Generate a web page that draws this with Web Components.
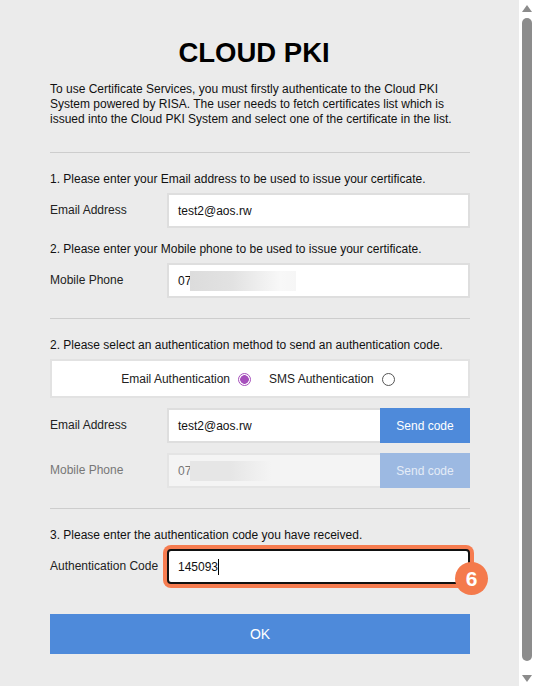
<!DOCTYPE html>
<html>
<head>
<meta charset="utf-8">
<title>Cloud PKI</title>
<style>
    html, body { margin: 0; height: 100%; overflow: hidden; background: #fff; }
    body { display: flex; font: 12px "Liberation Sans", Arial, sans-serif; color: #111; }
</style>
</head>
<body>
<pki-page>
    <h1 slot="title">CLOUD PKI</h1>
    <p slot="intro">To use Certificate Services, you must firstly authenticate to the Cloud PKI<br>System powered by RISA. The user needs to fetch certificates list which is<br>issued into the Cloud PKI System and select one of the certificate in the list.</p>

    <pki-section>
        <pki-note>1. Please enter your Email address to be used to issue your certificate.</pki-note>
        <pki-field label="Email Address" value="test2@aos.rw"></pki-field>
        <pki-note>2. Please enter your Mobile phone to be used to issue your certificate.</pki-note>
        <pki-field label="Mobile Phone" value="07" masked></pki-field>
    </pki-section>

    <pki-section>
        <pki-note>2. Please select an authentication method to send an authentication code.</pki-note>
        <pki-methods></pki-methods>
        <pki-field class="gap" label="Email Address" value="test2@aos.rw" action="Send code"></pki-field>
        <pki-field class="gap" label="Mobile Phone" value="07" masked action="Send code" disabled></pki-field>
    </pki-section>

    <pki-section>
        <pki-note>3. Please enter the authentication code you have received.</pki-note>
        <pki-field label="Authentication Code" value="145093" focused badge="6"></pki-field>
    </pki-section>

    <pki-ok>OK</pki-ok>
</pki-page>
<pki-scrollbar></pki-scrollbar>

<script>
"use strict";

const pageTemplate = document.createElement("template");
pageTemplate.innerHTML = `
    <style>
        :host {
            display: block;
            box-sizing: border-box;
            width: 519px;
            height: 686px;
            padding: 0 49px 0 50px;
            background: #ebebeb;
        }
        ::slotted(h1) {
            margin: 0;
            padding-top: 38px;
            padding-right: 12px;
            text-align: center;
            font-size: 27.5px;
            line-height: 30px;
            font-weight: bold;
            color: #000;
        }
        ::slotted(p) {
            margin: 14px 0 25px;
            line-height: 15px;
        }
    </style>
    <slot name="title"></slot>
    <slot name="intro"></slot>
    <slot></slot>
`;

class PkiPage extends HTMLElement {
    constructor() {
        super();
        this.attachShadow({mode: "open"}).append(pageTemplate.content.cloneNode(true));
    }
}

const sectionTemplate = document.createElement("template");
sectionTemplate.innerHTML = `
    <style>
        :host {
            display: block;
            border-top: 1px solid #cdcdcd;
            padding: 19px 0 20px;
        }
        ::slotted(.gap) {
            margin-top: 10px;
        }
    </style>
    <slot></slot>
`;

class PkiSection extends HTMLElement {
    constructor() {
        super();
        this.attachShadow({mode: "open"}).append(sectionTemplate.content.cloneNode(true));
    }
}

const noteTemplate = document.createElement("template");
noteTemplate.innerHTML = `
    <style>
        :host {
            display: block;
            line-height: 15px;
            margin-bottom: 6px;
        }
        :host(:not(:first-child)) {
            margin-top: 14px;
        }
    </style>
    <slot></slot>
`;

class PkiNote extends HTMLElement {
    constructor() {
        super();
        this.attachShadow({mode: "open"}).append(noteTemplate.content.cloneNode(true));
    }
}

const fieldTemplate = document.createElement("template");
fieldTemplate.innerHTML = `
    <style>
        :host {
            display: flex;
            height: 35px;
            color: #222;
        }
        .label {
            flex: 0 0 117px;
            line-height: 35px;
        }
        .box {
            position: relative;
            flex: 1;
            display: flex;
            align-items: center;
            box-sizing: border-box;
            padding-left: 9px;
            background: #fff;
            border: 2px solid #dedede;
            color: #111;
        }
        .mask {
            width: 106px;
            height: 20px;
            margin-left: -1px;
            background: linear-gradient(90deg, #dcdcdc, #e2e2e2 40%, #f8f8f8 85%, #f6f6f6);
        }
        .caret {
            width: 1px;
            height: 16px;
            background: #000;
        }
        button {
            flex: 0 0 90px;
            border: 0;
            padding: 0;
            background: #4e8ada;
            color: #fff;
            font: inherit;
        }
        :host([action]) .box {
            border-right: 0;
        }
        :host([disabled]) .label { color: #777; }
        :host([disabled]) .box { background: #f4f4f4; color: #777; border-color: #e4e4e4; }
        :host([disabled]) .mask { width: 90px; background: linear-gradient(90deg, #e6e6e6, #e6e6e6 45%, #f4f4f4 90%); }
        :host([disabled]) button { background: #9cb9e2; color: #e4ecf7; }
        :host([focused]) .box {
            border-color: #111;
            border-radius: 4px;
            box-shadow: 0 0 0 4px #f67c50;
        }
        .badge {
            position: absolute;
            right: -20px;
            top: 11px;
            width: 33px;
            height: 33px;
            border-radius: 50%;
            background: #f47a4c;
            color: #fff;
            font-size: 21px;
            font-weight: bold;
            line-height: 33px;
            text-align: center;
        }
    </style>
    <span class="label"></span>
    <div class="box"><span class="value"></span></div>
`;

class PkiField extends HTMLElement {
    constructor() {
        super();
        this.attachShadow({mode: "open"}).append(fieldTemplate.content.cloneNode(true));
    }

    connectedCallback() {
        const root = this.shadowRoot;
        const box = root.querySelector(".box");
        root.querySelector(".label").textContent = this.getAttribute("label");
        root.querySelector(".value").textContent = this.getAttribute("value");
        if(this.hasAttribute("masked")) {
            const mask = document.createElement("span");
            mask.className = "mask";
            box.append(mask);
        }
        if(this.hasAttribute("focused")) {
            const caret = document.createElement("span");
            caret.className = "caret";
            box.append(caret);
        }
        if(this.hasAttribute("badge")) {
            const badge = document.createElement("span");
            badge.className = "badge";
            badge.textContent = this.getAttribute("badge");
            box.append(badge);
        }
        if(this.hasAttribute("action")) {
            const button = document.createElement("button");
            button.textContent = this.getAttribute("action");
            root.append(button);
        }
    }
}

const methodsTemplate = document.createElement("template");
methodsTemplate.innerHTML = `
    <style>
        :host {
            display: flex;
            justify-content: center;
            align-items: center;
            box-sizing: border-box;
            height: 39px;
            background: #fff;
            border: 2px solid #e2e2e2;
            padding-right: 4px;
            color: #222;
        }
        .radio {
            box-sizing: border-box;
            width: 13px;
            height: 13px;
            margin: 2px 18px 0 8px;
            border-radius: 50%;
            border: 1px solid #555;
        }
        .radio.on {
            border: 1px solid #a64fbc;
            background: radial-gradient(circle, #a64fbc 0 4px, #fff 4.6px);
        }
        .radio:last-child { margin-right: 0; }
    </style>
    <span>Email Authentication</span><span class="radio on"></span>
    <span>SMS Authentication</span><span class="radio"></span>
`;

class PkiMethods extends HTMLElement {
    constructor() {
        super();
        this.attachShadow({mode: "open"}).append(methodsTemplate.content.cloneNode(true));
    }
}

const okTemplate = document.createElement("template");
okTemplate.innerHTML = `
    <style>
        :host {
            display: flex;
            justify-content: center;
            align-items: center;
            height: 40px;
            margin-top: 10px;
            background: #4e8ada;
            color: #fff;
            font-size: 14px;
        }
    </style>
    <slot></slot>
`;

class PkiOk extends HTMLElement {
    constructor() {
        super();
        this.attachShadow({mode: "open"}).append(okTemplate.content.cloneNode(true));
    }
}

const scrollbarTemplate = document.createElement("template");
scrollbarTemplate.innerHTML = `
    <style>
        :host {
            display: flex;
            flex-direction: column;
            align-items: center;
            box-sizing: border-box;
            width: 15px;
            height: 686px;
            padding: 5px 0 4px;
            background: #fff;
        }
        .thumb {
            flex: 1;
            width: 10px;
            margin: 6px 0 14px;
            border-radius: 5px;
            background: #8c8c8c;
        }
        .up, .down {
            width: 0;
            height: 0;
            border-left: 5px solid transparent;
            border-right: 5px solid transparent;
        }
        .up { border-bottom: 7px solid #8c8c8c; }
        .down { border-top: 7px solid #8c8c8c; }
    </style>
    <div class="up"></div>
    <div class="thumb"></div>
    <div class="down"></div>
`;

class PkiScrollbar extends HTMLElement {
    constructor() {
        super();
        this.attachShadow({mode: "open"}).append(scrollbarTemplate.content.cloneNode(true));
    }
}

window.customElements.define("pki-page", PkiPage);
window.customElements.define("pki-section", PkiSection);
window.customElements.define("pki-note", PkiNote);
window.customElements.define("pki-field", PkiField);
window.customElements.define("pki-methods", PkiMethods);
window.customElements.define("pki-ok", PkiOk);
window.customElements.define("pki-scrollbar", PkiScrollbar);
</script>
</body>
</html>
